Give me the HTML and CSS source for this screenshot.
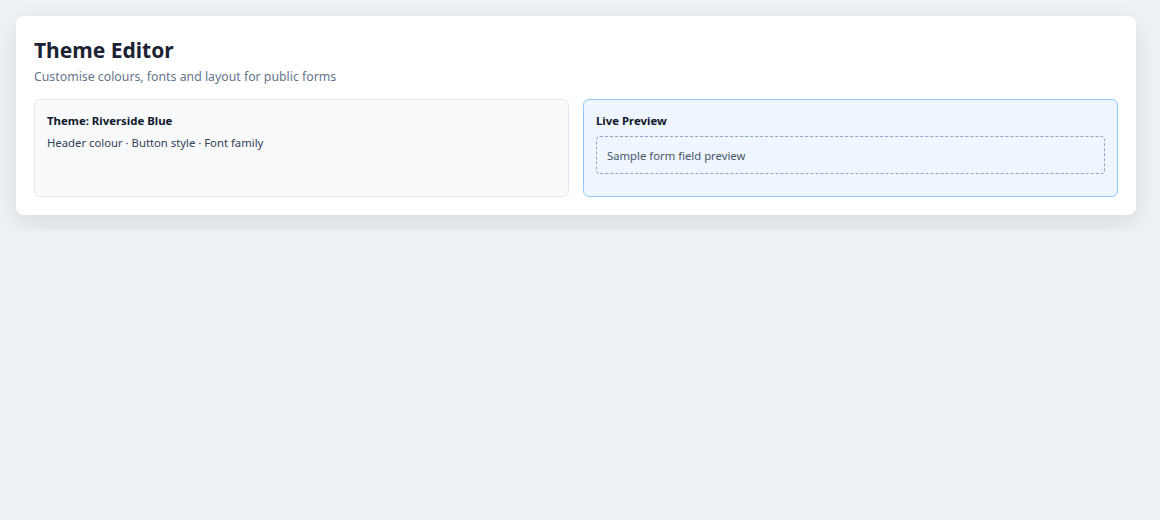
FILE: index.html
```html
<!DOCTYPE html>
<html>
<head>
<meta charset="utf-8">
<link rel="stylesheet" href="styles.css">
</head>
<body>
<div class="card">
  <h1 class="title">Theme Editor</h1>
  <p class="subtitle">Customise colours, fonts and layout for public forms</p>
  <div class="panels">
    <div class="panel">
      <div class="panel-title">Theme: Riverside Blue</div>
      <div class="panel-text">Header colour · Button style · Font family</div>
    </div>
    <div class="panel preview">
      <div class="panel-title">Live Preview</div>
      <div class="sample">Sample form field preview</div>
    </div>
  </div>
</div>
</body>
</html>
```
FILE: styles.css
```css
* { box-sizing: border-box; }
html, body { margin: 0; padding: 0; }
body {
  background: #eef1f5;
  font-family: "Segoe UI", "Noto Sans", "Open Sans", sans-serif;
  padding: 16px 24px 16px 16px;
}
.card {
  background: #fff;
  border-radius: 8px;
  padding: 19px 18px 18px;
  box-shadow: 0 8px 24px rgba(15, 23, 42, 0.10);
}
.title {
  margin: 0;
  font-size: 21px;
  font-weight: 700;
  color: #1a2233;
  line-height: 30px;
}
.subtitle {
  margin: 3px 0 0;
  font-size: 12.3px;
  color: #64748b;
  line-height: 18px;
}
.panels {
  margin-top: 13px;
  display: grid;
  grid-template-columns: 1fr 1fr;
  gap: 14px;
}
.panel {
  background: #f8fafc;
  border: 1px solid #e2e8f0;
  border-radius: 6px;
  padding: 12px;
  min-height: 98px;
}
.panel.preview {
  background: #eff6ff;
  border-color: #93c5fd;
}
.panel-title {
  font-size: 11.4px;
  font-weight: 700;
  color: #0f172a;
  line-height: 18px;
}
.panel-text {
  margin-top: 4px;
  font-size: 11.3px;
  color: #334155;
  line-height: 18px;
}
.sample {
  margin-top: 6px;
  border: 1px dashed #94a3b8;
  border-radius: 4px;
  padding: 0 10px;
  height: 38px;
  display: flex;
  align-items: center;
  font-size: 11.3px;
  color: #475569;
}
```
